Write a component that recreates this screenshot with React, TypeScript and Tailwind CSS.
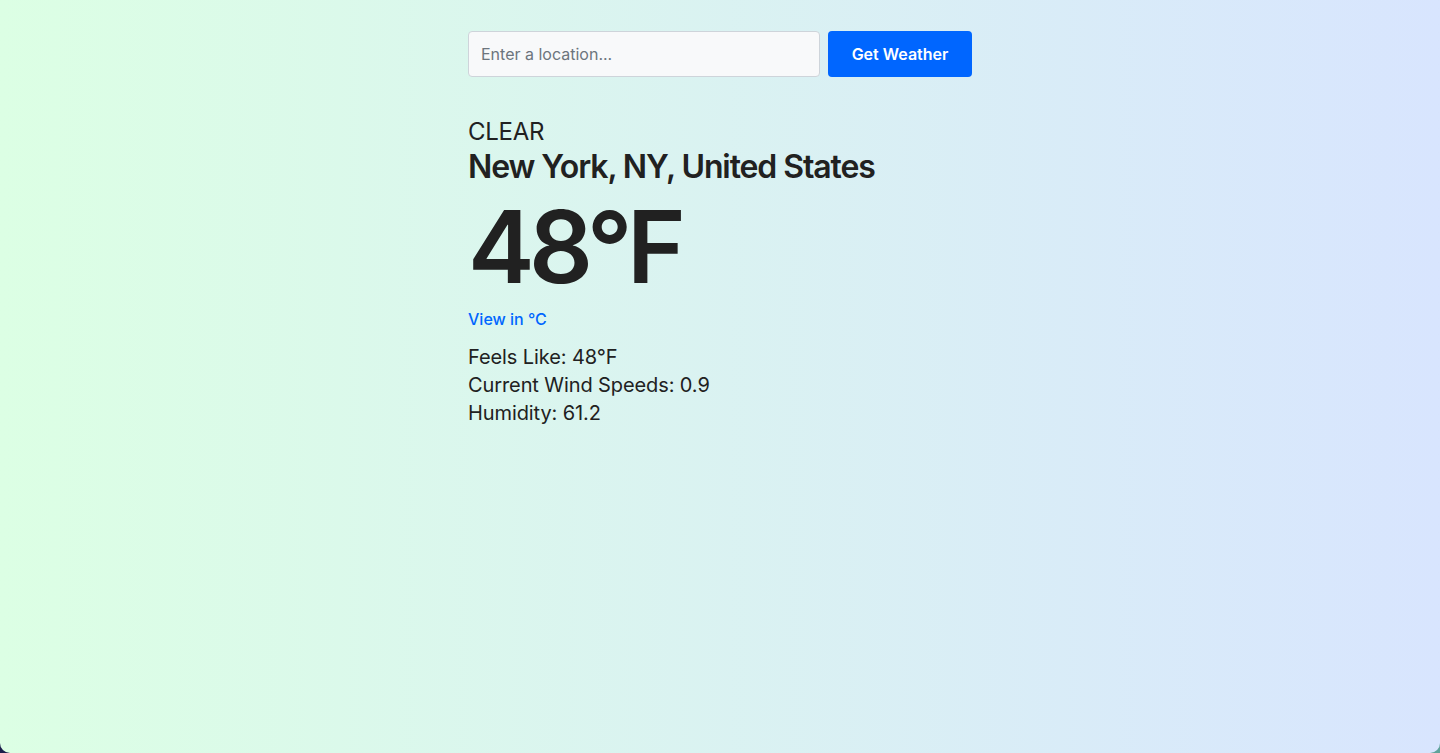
const App = () => {
  return (
    <div className="h-[753px] w-full bg-gradient-to-r from-[#1b1d4a] to-[#5fa39a]">
      <div
        className="h-full w-full rounded-b-[10px] bg-gradient-to-r from-[#dcffe4] to-[#d8e5fe] text-[#212121]"
        style={{ fontFamily: 'Inter, "Noto Sans", sans-serif' }}
      >
        <div className="mx-auto w-[504px] pt-[31px]">
          {/* Search */}
          <form className="flex gap-2" onSubmit={(e) => e.preventDefault()}>
            <input
              type="text"
              placeholder="Enter a location..."
              className="h-[46px] w-[352px] rounded-[4px] border border-[#ced4da] bg-[#f8f9fa] px-3 text-base placeholder:text-[#6c757d] focus:outline-none"
            />
            <button
              type="submit"
              className="h-[46px] w-[144px] rounded-[4px] bg-[#0066ff] text-base font-semibold text-white"
            >
              Get Weather
            </button>
          </form>

          {/* Current conditions */}
          <div className="mt-[40px]">
            <p className="text-2xl leading-[30px] tracking-[-0.3px]">CLEAR</p>
            <h1 className="text-[32px] font-semibold leading-[40px] tracking-[-1.1px]">
              New York, NY, United States
            </h1>
            <p className="mt-[2px] text-[100px] font-semibold leading-[116px] tracking-[-5.5px]">48°F</p>
            <button className="mt-[2px] text-base font-medium text-[#0066ff]">View in °C</button>
            <div className="mt-[12px] text-xl leading-[28px] tracking-[-0.1px]">
              <p>Feels Like: 48°F</p>
              <p>Current Wind Speeds: 0.9</p>
              <p>Humidity: 61.2</p>
            </div>
          </div>
        </div>
      </div>
    </div>
  );
};

export default App;
